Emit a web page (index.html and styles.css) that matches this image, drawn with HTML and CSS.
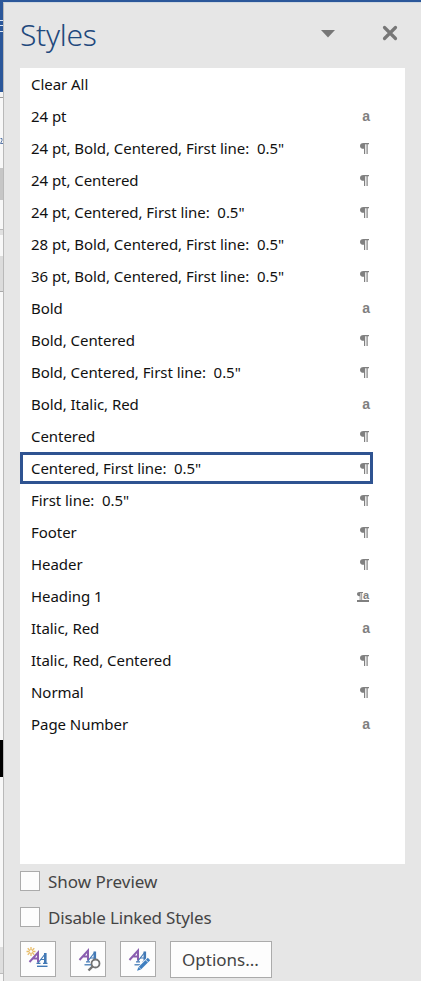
FILE: index.html
```html
<!DOCTYPE html>
<html lang="en">
<head>
    <meta charset="UTF-8">
    <meta name="viewport" content="width=device-width, initial-scale=1.0">
    <title>Styles</title>
    <link rel="stylesheet" href="styles.css">
</head>
<body>
    <!-- sliver of the document window behind the pane -->
    <div class="document">
        <div class="titlebar"><svg width="3" height="14" viewBox="0 0 3 14"><path d="M0 1.5h3M0 6.5h3M0 12.5h3" stroke="#dce6f5"/></svg></div>
        <div class="ribbon-top"></div>
        <div class="ribbon"><svg class="ribbon-mark" width="3" height="8" viewBox="0 0 3 8"><path d="M0.500 1.500h1.500v2L0.500 6.500H3" fill="none" stroke="#5a78a8"/></svg></div>
        <div class="ribbon-scroll"></div>
        <div class="ribbon-bottom"></div>
        <div class="ruler-gap"></div>
        <div class="ruler"></div>
        <div class="page"></div>
        <div class="page-image"></div>
        <div class="page-rest"></div>
        <div class="status"></div>
    </div>

    <div class="pane">
        <div class="pane-header">
            <h1>Styles</h1>
            <svg class="menu-arrow" width="14" height="8" viewBox="0 0 14 8"><path d="M0 0h14L7 7.500z" fill="#777"/></svg>
            <svg class="close" width="16" height="16" viewBox="0 0 16 16"><path d="M2.500 2.500l11 11M13.500 2.500l-11 11" stroke="#777" stroke-width="3.200" stroke-linecap="round"/></svg>
        </div>

        <ul class="style-list">
            <li><span>Clear All</span></li>
            <li><span>24 pt</span><i class="char">a</i></li>
            <li><span>24 pt, Bold, Centered, First line:  0.5"</span><svg class="para"><use href="#pilcrow"/></svg></li>
            <li><span>24 pt, Centered</span><svg class="para"><use href="#pilcrow"/></svg></li>
            <li><span>24 pt, Centered, First line:  0.5"</span><svg class="para"><use href="#pilcrow"/></svg></li>
            <li><span>28 pt, Bold, Centered, First line:  0.5"</span><svg class="para"><use href="#pilcrow"/></svg></li>
            <li><span>36 pt, Bold, Centered, First line:  0.5"</span><svg class="para"><use href="#pilcrow"/></svg></li>
            <li><span>Bold</span><i class="char">a</i></li>
            <li><span>Bold, Centered</span><svg class="para"><use href="#pilcrow"/></svg></li>
            <li><span>Bold, Centered, First line:  0.5"</span><svg class="para"><use href="#pilcrow"/></svg></li>
            <li><span>Bold, Italic, Red</span><i class="char">a</i></li>
            <li><span>Centered</span><svg class="para"><use href="#pilcrow"/></svg></li>
            <li class="selected"><span>Centered, First line:  0.5"</span><svg class="para"><use href="#pilcrow"/></svg></li>
            <li><span>First line:  0.5"</span><svg class="para"><use href="#pilcrow"/></svg></li>
            <li><span>Footer</span><svg class="para"><use href="#pilcrow"/></svg></li>
            <li><span>Header</span><svg class="para"><use href="#pilcrow"/></svg></li>
            <li><span>Heading 1</span><b class="linked"><svg class="para-small" viewBox="0 0 9 11" preserveAspectRatio="none"><use href="#pilcrow"/></svg><i>a</i></b></li>
            <li><span>Italic, Red</span><i class="char">a</i></li>
            <li><span>Italic, Red, Centered</span><svg class="para"><use href="#pilcrow"/></svg></li>
            <li><span>Normal</span><svg class="para"><use href="#pilcrow"/></svg></li>
            <li><span>Page Number</span><i class="char">a</i></li>
        </ul>

        <div class="check"><span class="box"></span><span class="preview">Show Preview</span></div>
        <div class="check"><span class="box"></span><span>Disable Linked Styles</span></div>

        <div class="buttons">
            <button class="icon-button" aria-label="New Style">
                <svg width="34" height="34" viewBox="0 0 34 34">
                    <path d="M8.500 20L17 10.500L17 20.500M12 16.500h5" fill="none" stroke="#8a5eb0" stroke-width="2"/>
                    <use href="#blue-a"/>
                    <path d="M16 24.300h10.500" stroke="#4279b5" stroke-width="1.400"/>
                    <circle cx="10" cy="9.500" r="4.200" fill="#fdfdfd"/>
                    <path d="M10 5v2.500M10 11.500V14M5.500 9.500H8M12 9.500h2.500M6.700 6.200l1.800 1.800M11.500 11l1.800 1.800M13.300 6.200L11.500 8M8.500 11l-1.800 1.800" stroke="#e8bd6a" stroke-width="1.300"/>
                    <circle cx="10" cy="9.500" r="1.900" fill="#fff" stroke="#e8bd6a"/>
                </svg>
            </button>
            <button class="icon-button" aria-label="Style Inspector">
                <svg width="34" height="34" viewBox="0 0 34 34">
                    <use href="#letters"/>
                    <circle cx="24.500" cy="21.500" r="4" fill="#fdfdfd" stroke="#737373" stroke-width="1.800"/>
                    <path d="M21.500 24.500l-4 4" stroke="#737373" stroke-width="2.400"/>
                </svg>
            </button>
            <button class="icon-button" aria-label="Manage Styles">
                <svg width="34" height="34" viewBox="0 0 34 34">
                    <use href="#letters"/>
                    <path d="M28.500 16.500L17 28" stroke="#fdfdfd" stroke-width="5"/>
                    <path d="M28 17L19 26" stroke="#3f7fc0" stroke-width="3.400"/>
                    <path d="M17.500 25l2.500 2.500-4 1.200z" fill="#3f7fc0"/>
                    <path d="M24.500 17.800l2.800 2.800" stroke="#fdfdfd" stroke-width="0.800"/>
                </svg>
            </button>
            <button class="options">Options...</button>
        </div>
    </div>

    <svg class="defs" width="0" height="0">
        <defs>
            <g id="pilcrow">
                <path d="M9 0H3.500C1.200 0 0 1.100 0 2.900S1.200 5.800 3.500 5.800H4V11h1.200V1.300h1.300V11h1.200V1.300H9z" fill="#808080"/>
            </g>
            <g id="blue-a" fill="none" stroke="#4279b5">
                <path d="M17 21L24.500 11.500" stroke-width="1.200"/>
                <path d="M24.300 11V21" stroke-width="2.600"/>
                <path d="M19.500 17.500h5M15.500 21.300h4M22 21.300h4.500" stroke-width="1.200"/>
            </g>
            <g id="letters">
                <path d="M8.500 18L17 8.500L17 18.500M12 14.500h5" fill="none" stroke="#8a5eb0" stroke-width="2"/>
                <use href="#blue-a" x="-0.500" y="-1.500"/>
                <path d="M13.500 22.800h8" stroke="#4279b5" stroke-width="1.300"/>
            </g>
        </defs>
    </svg>
</body>
</html>
```
FILE: styles.css
```css
body {
    margin: 0;
    height: 981px;
    display: flex;
    overflow: hidden;
    background: #e6e6e6;
    border-top: 2px solid #2b579a;
    box-sizing: border-box;
    font-family: "Noto Sans", "Open Sans", sans-serif;
}
.document {
    width: 3px;
    flex: none;
    overflow: hidden;
    background: #f8f8f8;
}
.titlebar { height: 73px; padding-top: 17px; background: #2b579a; }
.titlebar svg { display: block; }
.ribbon-top { height: 5px; background: #f4f4f4; border-bottom: 1px solid #999; }
.ribbon { height: 70px; }
.ribbon-mark { display: block; padding-top: 39px; }
.ribbon-scroll { height: 32px; background: #c6c6c6; }
.ribbon-bottom { height: 29px; border-bottom: 1px solid #bbb; }
.ruler-gap { height: 5px; background: #e0e0e0; margin-bottom: 21px; }
.ruler { height: 35px; background: #dcdcdc; border-bottom: 1px solid #aaa; }
.page { height: 448px; }
.page-image { height: 37px; background: #000; }
.page-rest { height: 170px; }
.status { height: 26px; background: #dedede; border-bottom: 1px solid #bbb; }
.pane {
    flex: 1;
    border-left: 1px solid #b9b9b9;
    border-top: 1px solid #d0d8e0;
    padding: 0 16px;
}
.pane-header {
    height: 65px;
    display: flex;
    align-items: flex-start;
}
h1 {
    margin: 10px 0 0;
    width: 301px;
    font: 350 30px/44px "Noto Sans", sans-serif;
    letter-spacing: -0.3px;
    color: #1f497d;
}
.menu-arrow { margin-top: 27px; }
.close { margin: 22px 0 0 47px; }
.style-list {
    list-style: none;
    margin: 0;
    padding: 0;
    width: 385px;
    height: 796px;
    background: #fff;
}
.style-list li {
    width: 353px;
    height: 32px;
    padding: 0 3px 0 11px;
    box-sizing: border-box;
    display: flex;
    align-items: center;
    justify-content: space-between;
    font-size: 15px;
    letter-spacing: -0.05px;
    white-space: pre;
    color: #111;
}
.style-list .selected {
    border: 3px solid #2f5391;
    padding: 0 0 0 8px;
}
.char {
    font: bold 14px/20px "Liberation Sans", sans-serif;
    color: #808080;
}
.para { width: 9px; height: 11px; margin-right: 1px; }
.linked {
    display: flex;
    align-items: flex-end;
    height: 9px;
    margin-right: 1px;
    border-bottom: 2px solid #808080;
    font: bold 11px/9px "Liberation Sans", sans-serif;
    color: #808080;
}
.linked i { font-style: normal; }
.para-small { width: 6px; height: 8px; }
.check {
    display: flex;
    align-items: center;
    height: 36px;
    font-size: 17px;
    letter-spacing: -0.17px;
    color: #444;
}
.style-list + .check { margin-top: -1px; }
.preview { letter-spacing: 0; }
.box {
    width: 18px;
    height: 18px;
    margin-right: 8px;
    border: 1px solid #ababab;
    background: #fdfdfd;
}
.buttons { display: flex; gap: 14px; margin-top: 6px; }
button {
    box-sizing: border-box;
    padding: 0;
    border: 1px solid #ababab;
    background: #fdfdfd;
    color: #444;
}
.icon-button { width: 36px; height: 36px; }
.icon-button svg { display: block; }
.options {
    width: 102px;
    height: 37px;
    padding-right: 1px;
    font: 17px "Noto Sans", sans-serif;
}
.defs { position: absolute; }
```
